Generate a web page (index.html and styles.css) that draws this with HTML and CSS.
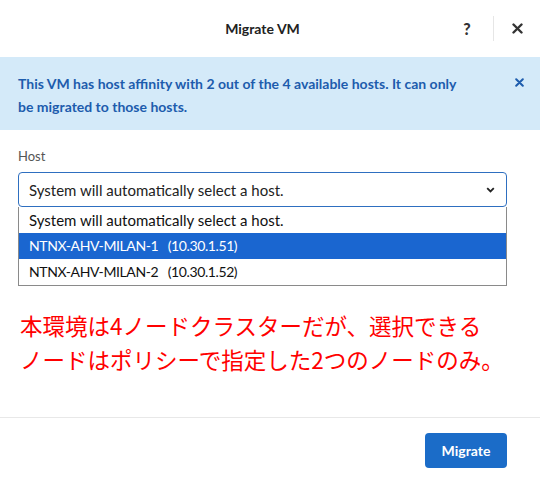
FILE: index.html
```html
<!DOCTYPE html>
<html lang="en">

<head>
    <meta charset="UTF-8">
    <meta name="viewport" content="width=device-width, initial-scale=1.0">
    <title>Migrate VM</title>
    <link rel="stylesheet" href="styles.css">
</head>

<body>
    <div class="modal">
        <header class="modal-head">
            <h1 class="modal-title">Migrate VM</h1>
            <div class="modal-actions">
                <span class="help">?</span>
                <span class="sep"></span>
                <span class="close">
                    <svg width="11" height="11" viewBox="0 0 11 11">
                        <path d="M1.5 1.5 L9.5 9.5 M9.5 1.5 L1.5 9.5" stroke="#333" stroke-width="2.4" stroke-linecap="round"/>
                    </svg>
                </span>
            </div>
        </header>

        <div class="notice">
            <p>This VM has host affinity with 2 out of the 4 available hosts. It can only be migrated to those hosts.</p>
            <span class="notice-close">
                <svg width="9" height="9" viewBox="0 0 9 9">
                    <path d="M1.2 1.2 L7.8 7.8 M7.8 1.2 L1.2 7.8" stroke="#1d5cad" stroke-width="2" stroke-linecap="round"/>
                </svg>
            </span>
        </div>

        <div class="modal-body">
            <label class="field-label">Host</label>
            <div class="select">
                <span>System will automatically select a host.</span>
                <svg width="9" height="6" viewBox="0 0 9 6">
                    <path d="M1.2 1.2 L4.5 4.5 L7.8 1.2" fill="none" stroke="#222" stroke-width="1.8"/>
                </svg>
            </div>
            <ul class="options">
                <li>System will automatically select a host.</li>
                <li class="host active">NTNX-AHV-MILAN-1&nbsp;&nbsp;&nbsp;(10.30.1.51)</li>
                <li class="host">NTNX-AHV-MILAN-2&nbsp;&nbsp;&nbsp;(10.30.1.52)</li>
            </ul>

            <p class="memo">本環境は4ノードクラスターだが、選択できる<br>ノードはポリシーで指定した2つのノードのみ。</p>
        </div>

        <footer class="modal-foot">
            <button class="btn">Migrate</button>
        </footer>
    </div>
</body>

</html>
```

FILE: styles.css
```css
body {
    margin: 0;
    background: #fff;
    font-family: "Lato", "Liberation Sans", sans-serif;
    color: #222;
}

.modal {
    width: 540px;
    height: 481px;
    display: flex;
    flex-direction: column;
}

/* header */
.modal-head {
    height: 57px;
    display: flex;
    align-items: center;
    padding-left: 70px;
    box-sizing: border-box;
}

.modal-title {
    flex: 1;
    margin: 0;
    text-align: center;
    font-size: 14px;
    font-weight: bold;
    color: #222;
}

.modal-actions {
    display: flex;
    align-items: center;
    width: 85px;
}

.help {
    width: 24px;
    text-align: center;
    font-weight: 900;
    font-size: 16px;
    color: #333;
}

.sep {
    width: 1px;
    height: 25px;
    background: #e6e6e6;
    margin-left: 14px;
}

.close {
    display: flex;
    margin-left: 18px;
}

/* info banner */
.notice {
    background: #d4eaf9;
    display: flex;
    align-items: flex-start;
    padding: 15px 16px 12px 18px;
}

.notice p {
    margin: 0;
    flex: 1;
    padding-right: 45px;
    font-size: 14px;
    line-height: 23px;
    font-weight: bold;
    color: #1d5cad;
}

.notice-close {
    display: flex;
    margin-top: 6px;
}

/* body */
.modal-body {
    padding: 18px 33px 0 18px;
    flex: 1;
}

.field-label {
    display: block;
    font-size: 13px;
    color: #555;
    margin-bottom: 8px;
}

.select {
    height: 35px;
    box-sizing: border-box;
    border: 1px solid #2e6fc0;
    border-radius: 4px;
    display: flex;
    align-items: center;
    justify-content: space-between;
    padding: 0 11px 0 10px;
    font-size: 15px;
    color: #222;
}

.options {
    margin: 0;
    padding: 0;
    list-style: none;
    border: 1px solid #8a8a8a;
    border-top: none;
}

.options li {
    height: 26px;
    line-height: 26px;
    padding-left: 10px;
    font-size: 15px;
    color: #111;
}

.options li.host {
    font-size: 14px;
    letter-spacing: -0.4px;
}

.options li.active {
    background: #1a66d0;
    color: #fff;
}

.memo {
    margin: 22px 0 0 2px;
    font-family: "Noto Sans CJK JP", sans-serif;
    font-size: 22.5px;
    line-height: 34px;
    white-space: nowrap;
    color: #ff0000;
}

/* footer */
.modal-foot {
    border-top: 1px solid #e8e8e8;
    display: flex;
    justify-content: flex-end;
    padding: 15px 33px 13px 0;
}

.btn {
    width: 82px;
    height: 35px;
    border: none;
    border-radius: 4px;
    background: #1b6cc8;
    color: #fff;
    font-family: "Lato", "Liberation Sans", sans-serif;
    font-weight: bold;
    font-size: 14px;
}
```
